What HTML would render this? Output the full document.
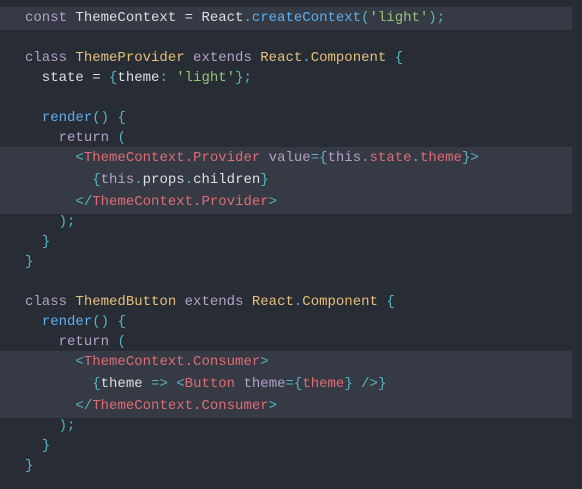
<!DOCTYPE html>
<html><head><style>
body{margin:0;width:582px;height:489px;background:#282c34;overflow:hidden;font-family:"Liberation Mono",monospace;font-size:14px;color:#dcdfe4}
.l{position:absolute;left:25px;height:20px;line-height:20px;white-space:pre}
.band{position:absolute;left:0;width:572px;background:#353a44}
.k{color:#b3a2c9}.c{color:#e5c07b}.s{color:#98c379}.f{color:#61afef}.t{color:#e06c75}.p{color:#56b6c2}.a{color:#d19a66}
</style></head><body>
<div class="band" style="top:7px;height:23px"></div>
<div class="band" style="top:147px;height:67px"></div>
<div class="band" style="top:351px;height:67px"></div>
<div class="l" style="top:8px"><span class="k">const</span> ThemeContext = React<span class="p">.</span><span class="f">createContext</span><span class="p">(</span><span class="s">'light'</span><span class="p">);</span></div>
<div class="l" style="top:48px"><span class="k">class</span> <span class="c">ThemeProvider</span> <span class="k">extends</span> <span class="c">React</span><span class="p">.</span><span class="c">Component</span> <span class="p">{</span></div>
<div class="l" style="top:68px">  state = <span class="p">{</span>theme<span class="p">:</span> <span class="s">'light'</span><span class="p">};</span></div>
<div class="l" style="top:108px">  <span class="f">render</span><span class="p">()</span> <span class="p">{</span></div>
<div class="l" style="top:128px">    <span class="k">return</span> <span class="p">(</span></div>
<div class="l" style="top:148px">      <span class="p">&lt;</span><span class="t">ThemeContext.Provider</span> <span class="k">value</span><span class="p">={</span><span class="k">this</span><span class="p">.</span><span class="t">state</span><span class="p">.</span><span class="t">theme</span><span class="p">}&gt;</span></div>
<div class="l" style="top:170px">        <span class="p">{</span><span class="k">this</span><span class="p">.</span>props<span class="p">.</span>children<span class="p">}</span></div>
<div class="l" style="top:192px">      <span class="p">&lt;/</span><span class="t">ThemeContext.Provider</span><span class="p">&gt;</span></div>
<div class="l" style="top:212px">    <span class="p">);</span></div>
<div class="l" style="top:232px">  <span class="p">}</span></div>
<div class="l" style="top:252px"><span class="p">}</span></div>
<div class="l" style="top:292px"><span class="k">class</span> <span class="c">ThemedButton</span> <span class="k">extends</span> <span class="c">React</span><span class="p">.</span><span class="c">Component</span> <span class="p">{</span></div>
<div class="l" style="top:312px">  <span class="f">render</span><span class="p">()</span> <span class="p">{</span></div>
<div class="l" style="top:332px">    <span class="k">return</span> <span class="p">(</span></div>
<div class="l" style="top:352px">      <span class="p">&lt;</span><span class="t">ThemeContext.Consumer</span><span class="p">&gt;</span></div>
<div class="l" style="top:374px">        <span class="p">{</span>theme <span class="p">=&gt;</span> <span class="p">&lt;</span><span class="t">Button</span> <span class="k">theme</span><span class="p">={</span><span class="t">theme</span><span class="p">}</span> <span class="p">/&gt;}</span></div>
<div class="l" style="top:396px">      <span class="p">&lt;/</span><span class="t">ThemeContext.Consumer</span><span class="p">&gt;</span></div>
<div class="l" style="top:416px">    <span class="p">);</span></div>
<div class="l" style="top:436px">  <span class="p">}</span></div>
<div class="l" style="top:456px"><span class="p">}</span></div>
</body></html>
